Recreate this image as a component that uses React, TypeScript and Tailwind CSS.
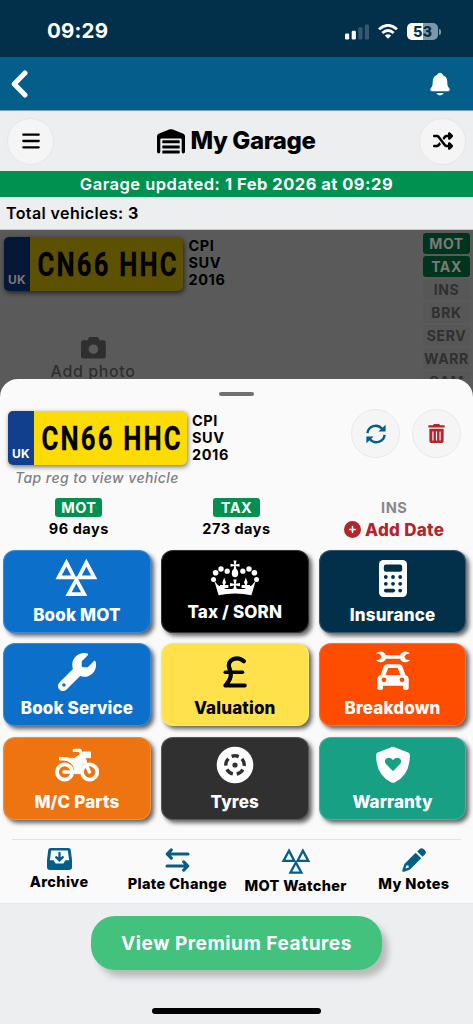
import React from 'react'
import type { ReactNode } from 'react'
import { FaCirclePlus, FaShuffle, FaTrashCan, FaWrench } from 'react-icons/fa6'
import { IoNotifications } from 'react-icons/io5'
import clsx from 'clsx'

const Triangles = ({ className, stroke }: { className: string; stroke: number }) => (
  <svg viewBox="0 0 42 36" className={className} fill="none" stroke="currentColor" strokeWidth={stroke}>
    <path d="M11.2 3.5 18.6 17.8H3.5Z" />
    <path d="M30.6 3.5 38.3 17.8H23.2Z" />
    <path d="M20.8 20.2 28.6 34.3H13.2Z" />
  </svg>
)

const GarageIcon = () => (
  <svg viewBox="0 0 28 25" className="h-[25px] w-7" fill="currentColor">
    <path d="M0 22.8V7.2Q0 5.4 1.6 4.7L12.8.3Q14 0 15.2.3L26.4 4.7Q28 5.4 28 7.2V22.8Q28 24.4 26.3 24.4 24.7 24.4 24.7 22.8V10.6Q24.7 9.4 23.5 9.4H4.5Q3.3 9.4 3.3 10.6V22.8Q3.3 24.4 1.7 24.4 0 24.4 0 22.8Z" />
    <rect x="5.3" y="11.3" width="17.4" height="3" rx=".6" />
    <rect x="5.3" y="16.4" width="17.4" height="3" rx=".6" />
    <rect x="5.3" y="21.4" width="17.4" height="3" rx=".6" />
  </svg>
)

const CameraIcon = () => (
  <svg viewBox="0 0 25 22" className="h-[22px] w-[25px]" fill="currentColor">
    <path
      fillRule="evenodd"
      d="M9 0H16Q17.2 0 17.6 1.2L18.3 3.2H22.3Q24.8 3.2 24.8 5.7V19Q24.8 21.5 22.3 21.5H2.5Q0 21.5 0 19V5.7Q0 3.2 2.5 3.2H6.7L7.4 1.2Q7.8 0 9 0ZM12.4 7.4A4.8 4.8 0 1 0 12.4 17 4.8 4.8 0 1 0 12.4 7.4Z"
    />
  </svg>
)

const RefreshIcon = () => (
  <svg viewBox="0 0 20 20" className="size-[20px]" fill="none" stroke="currentColor" strokeWidth="2.4">
    <path d="M1.4 9.2A8.3 8.3 0 0 1 16 4.8" />
    <path d="M18.6 10.8A8.3 8.3 0 0 1 4 15.2" />
    <path d="M19.6.8V7.6H12.4Z" fill="currentColor" stroke="none" />
    <path d="M.4 19.2V12.4H7.6Z" fill="currentColor" stroke="none" />
  </svg>
)

const cross = 'M-1.7-5.2H1.7L.8-.8 5-1.7V1.7L.8.8 1.7 5H-1.7L-.8.8-5 1.7V-1.7L-.8-.8Z'

const CrownIcon = () => (
  <svg viewBox="0 0 50 36" className="h-9 w-[50px]" fill="currentColor">
    <path d="M4.2 20.5 8.6 35.2Q25 31.8 41.4 35.2L45.8 20.5 42.6 24.6Q40 27.6 37.6 25.4 36.4 29.4 31 29 26 29 25 27.4 24 29 19 29 13.6 29.4 12.4 25.4 10 27.6 7.4 24.6Z" />
    <path d={cross} transform="translate(25 24.6)" />
    <path d={cross} transform="translate(25 5.3) scale(.9)" />
    <ellipse cx="25" cy="13.2" rx="3.2" ry="4.1" />
    <path d="M14.2 17.6 16 22.5 14.8 25H18.4V28H10V25H13.2L12.4 22.5Z" />
    <path d="M35.8 17.6 34 22.5 35.2 25H31.6V28H40V25H36.8L37.6 22.5Z" />
    <circle cx="3.5" cy="19.4" r="2.5" />
    <circle cx="5.6" cy="12.8" r="2.8" />
    <circle cx="11" cy="9" r="2.7" />
    <circle cx="17.2" cy="11.2" r="2.6" />
    <circle cx="32.8" cy="11.2" r="2.6" />
    <circle cx="39" cy="9" r="2.7" />
    <circle cx="44.4" cy="12.8" r="2.8" />
    <circle cx="46.5" cy="19.4" r="2.5" />
  </svg>
)

const CalculatorIcon = () => (
  <svg viewBox="0 0 28 37" className="h-[37px] w-7">
    <rect width="28" height="37" rx="4.5" fill="currentColor" />
    <g fill="#02304a">
      <rect x="4.8" y="4.5" width="18.4" height="7.3" rx="2.2" />
      <circle cx="6.8" cy="17" r="1.9" />
      <circle cx="14" cy="17" r="1.9" />
      <circle cx="21.2" cy="17" r="1.9" />
      <circle cx="6.8" cy="23.8" r="1.9" />
      <circle cx="14" cy="23.8" r="1.9" />
      <circle cx="21.2" cy="23.8" r="1.9" />
      <rect x="4.9" y="28.8" width="11.2" height="3.6" rx="1.8" />
      <circle cx="21.2" cy="30.6" r="1.9" />
    </g>
  </svg>
)

const PoundIcon = () => (
  <svg viewBox="0 0 24 32" className="h-8 w-6" fill="none" stroke="currentColor" strokeWidth="4.2" strokeLinecap="round" strokeLinejoin="round">
    <path d="M20.8 5.3C18.5 3 16.3 2.3 13.8 2.3 9 2.3 5.6 5.5 5.8 9.8 6 12 7.8 14 7.8 19 7.8 23.5 5 26 2.5 29.5H21.7" />
    <path d="M2.2 16.3H19.6" strokeWidth="3.4" />
  </svg>
)

const RepairIcon = () => (
  <svg viewBox="0 0 36 40" className="h-10 w-9" fill="currentColor">
    <path d="M1 2.3Q3.2.3 6 .4 9.5.8 11 4.2H25Q26.5.8 30 .4 32.8.3 35 2.3L31 3.2 29.3 5.8 31 8.4 35 9.3Q32.8 11.4 30 11.3 26.5 11 25 7.7H11Q9.5 11 6 11.3 3.2 11.4 1 9.3L5 8.4 6.7 5.8 5 3.2Z" />
    <path
      fillRule="evenodd"
      d="M12 13.2H24Q26.5 13.2 27.4 15.6L30.5 24.3Q33.7 25 33.7 28.5V37Q33.7 39 31.5 39H30Q28 39 28 37V34.8H8V37Q8 39 6 39H4.5Q2.3 39 2.3 37V28.5Q2.3 25 5.5 24.3L8.6 15.6Q9.5 13.2 12 13.2ZM13.3 17 10.5 24H25.5L22.7 17ZM9 26.4A2.4 2.4 0 1 0 9 31.2 2.4 2.4 0 1 0 9 26.4ZM27 26.4A2.4 2.4 0 1 0 27 31.2 2.4 2.4 0 1 0 27 26.4Z"
    />
  </svg>
)

const BikeIcon = () => (
  <svg viewBox="0 0 44 34" className="h-[34px] w-11" fill="none" stroke="currentColor" strokeWidth="3.8">
    <circle cx="9.6" cy="24" r="7.6" />
    <circle cx="34.6" cy="24" r="7.6" />
    <path d="M9 24H21" strokeWidth="3.4" strokeLinecap="round" />
    <path d="M19.2 2.4H25L34.4 24" strokeWidth="3.4" strokeLinecap="round" strokeLinejoin="round" />
    <path d="M4.5 9.4Q10 9 15 10.4 20 11.4 23 8L28.5 4H35.5V9.6H30.4L31.4 14.2Q27.4 15.4 26 19.5L25 25.6H20Q20.5 16 12 12.6 8 11.6 4.5 12Z" fill="currentColor" strokeWidth="1" strokeLinejoin="round" />
  </svg>
)

const TyreIcon = () => (
  <svg viewBox="0 0 38 38" className="size-[38px]" fill="none">
    <circle cx="19" cy="19" r="18.3" fill="currentColor" />
    <circle cx="19" cy="19" r="9.2" stroke="#303030" strokeWidth="3.4" strokeDasharray="7.6 3.96" strokeDashoffset="3.8" transform="rotate(-90 19 19)" />
    <circle cx="19" cy="19" r="2.6" fill="#303030" />
  </svg>
)

const ShieldIcon = () => (
  <svg viewBox="0 0 36 38" className="h-[38px] w-9" fill="currentColor">
    <path
      fillRule="evenodd"
      d="M16.4 1.2Q18 .4 19.6 1.2L33.2 6.4Q35 7.2 34.9 9.2 34.8 29.5 19.6 36.4 18 37.2 16.4 36.4 1.2 29.5 1.1 9.2 1 7.2 2.8 6.4ZM18 25.2 25 18Q27.3 15 25 12.7 21.5 10.2 18 14 14.5 10.2 11 12.7 8.7 15 11 18Z"
    />
  </svg>
)

const ArchiveIcon = () => (
  <svg viewBox="0 0 25 22" className="h-[22px] w-[25px]">
    <path d="M3.4 0H21.6Q23.4 0 23.7 1.8L25 12V19Q25 22 22 22H3Q0 22 0 19V12L1.3 1.8Q1.6 0 3.4 0Z" fill="#055e8a" />
    <path d="M4.2 2.6H20.8L22.2 12.3H18.4L16.4 15.4H8.6L6.6 12.3H2.8Z" fill="#fafafa" />
    <path d="M12.5 5V12M9.2 9.2 12.5 12.4 15.8 9.2" stroke="#055e8a" strokeWidth="2.3" fill="none" strokeLinecap="round" />
  </svg>
)

const SwapIcon = () => (
  <svg viewBox="0 0 25 24" className="h-6 w-[25px]" fill="none" stroke="currentColor" strokeWidth="3.1" strokeLinecap="round" strokeLinejoin="round">
    <path d="M23 6H2.2M6.3 1.8 2.2 6 6.3 10.2" />
    <path d="M2 18H22.8M18.7 13.8 22.8 18 18.7 22.2" />
  </svg>
)

const PencilIcon = () => (
  <svg viewBox="0 0 24 24" className="size-6" fill="currentColor">
    <path d="M17.4 1.2Q19.6-.9 22 1.4L22.7 2.1Q25 4.4 22.8 6.6L20.6 8.7 15.2 3.4Z" />
    <path fillRule="evenodd" d="M13.7 4.8 19.2 10.3 8 21.4 2.2 23.7Q0 24.4.4 22L2.4 16ZM4.6 17.2 3.4 20.6 6.8 19.4 6.5 17.6Z" />
  </svg>
)

const StatusBar = () => (
  <div className="flex h-[57px] items-center justify-between bg-[#02304a] pt-[6px] pr-[32px] pl-[47px] text-white">
    <span className="text-[20.5px] font-bold tracking-[0.2px]">09:29</span>
    <div className="flex items-center">
      <svg viewBox="0 0 25 16" className="mr-2 h-4 w-[25px]" fill="currentColor">
        <rect x="0" y="9.5" width="4.2" height="6" rx="1.2" />
        <rect x="6.7" y="6.7" width="4.2" height="8.8" rx="1.2" />
        <rect x="13.3" y="3.3" width="4.2" height="12.2" rx="1.2" opacity=".2" />
        <rect x="19.8" y="0.5" width="4.2" height="15" rx="1.2" opacity=".2" />
      </svg>
      <svg viewBox="0 0 20 15" className="mr-[9px] h-[15px] w-5" fill="none" stroke="currentColor" strokeWidth="2.8">
        <path d="M1 5.3Q10-2.6 19 5.3" />
        <path d="M4.3 9Q10 4 15.7 9" />
        <path d="M10 14.7 6.8 11.5Q10 8.8 13.2 11.5Z" fill="currentColor" stroke="none" />
      </svg>
      <div className="flex h-[17px] w-[31px] items-center justify-center rounded-[5px] bg-linear-to-r from-white from-53% to-[#7f97a4] to-53% text-[14.5px] font-extrabold">
        <span className="text-[#02304a]">53</span>
      </div>
      <span className="ml-px h-[6px] w-[2px] rounded-r-full bg-[#7f97a4]" />
    </div>
  </div>
)

const Plate = ({ dim }: { dim?: boolean }) => (
  <div
    className={clsx(
      'flex h-[53.5px] w-[178.5px] shrink-0 overflow-hidden rounded-[5px]',
      dim ? 'bg-[#5c5003] shadow-[1px_2px_5px_#222]' : 'bg-[#fddc06] shadow-[1px_2px_5px_#777]',
    )}
  >
    <div
      className={clsx(
        'flex w-[26px] items-end justify-center pb-[4px] text-[12px] leading-[14px] font-bold tracking-[0.3px]',
        dim ? 'bg-[#051838] text-[#777]' : 'bg-[#123f8d] text-white',
      )}
    >
      UK
    </div>
    <svg viewBox="0 0 152 53" className="h-[53px] w-[152px] font-['Roboto'] text-[32.5px] font-bold" fill="#000" stroke="#000" strokeWidth=".3">
      <text transform="translate(7.5 38.6) scale(0.79 1)" textLength="176" lengthAdjust="spacing">
        CN66 HHC
      </text>
    </svg>
  </div>
)

const Model = () => (
  <div className="text-[14.5px] leading-[17px] font-bold tracking-[0.6px] text-black">
    <p>CPI</p>
    <p>SUV</p>
    <p>2016</p>
  </div>
)

const statuses = ['INS', 'BRK', 'SERV', 'WARR', 'CAM']

const VehicleList = () => (
  <div className="flex h-[150px] justify-between overflow-hidden bg-[#5a5a5a] pt-[3px] pr-[3px] pl-1">
    <div>
      <div className="flex gap-[6px] pt-[4px]">
        <Plate dim />
        <Model />
      </div>
      <div className="flex w-[178px] flex-col items-center gap-[2px] pt-[46px] text-[#2e2e2e]">
        <CameraIcon />
        <p className="text-[16px] leading-[20px] font-medium tracking-[0.6px]">Add photo</p>
      </div>
    </div>
    <div className="flex w-[47px] flex-col gap-[2px] text-center text-[14px] leading-[21px] font-bold tracking-[0.6px] text-[#303030]">
      <p className="rounded-[3px] bg-[#00351d] text-[#7a7a7a]">MOT</p>
      <p className="rounded-[3px] bg-[#00351d] text-[#7a7a7a]">TAX</p>
      {statuses.map((status) => (
        <p key={status} className="rounded-[3px] bg-[#575757]">
          {status}
        </p>
      ))}
    </div>
  </div>
)

const Tile = ({ label, className, children }: { label: string; className: string; children: ReactNode }) => (
  <button
    className={clsx(
      'flex h-[83px] flex-col items-center rounded-[12px] shadow-[3px_3px_4px_#666] outline outline-white/20 -outline-offset-1',
      className,
    )}
  >
    {children}
    <span className="mt-auto text-[17px] leading-[20px] font-extrabold tracking-[0.15px]">{label}</span>
  </button>
)

const App = () => {
  return (
    <main className="flex h-[1024px] w-[473px] flex-col overflow-hidden bg-[#edeef0] font-['Inter',sans-serif] text-black">
      <StatusBar />
      <header className="flex h-[54px] items-center justify-between border-b border-[#7ca2b8] bg-[#055e8a] pr-[20px] pl-[11px] text-white">
        <svg viewBox="0 0 17 28" className="h-7 w-[17px]" fill="none" stroke="currentColor" strokeWidth="5" strokeLinecap="round" strokeLinejoin="round">
          <path d="M14 3 3.2 14 14 25" />
        </svg>
        <IoNotifications className="size-[26px]" />
      </header>
      <div className="flex h-[60px] items-center justify-between px-[7px]">
        <button className="flex size-[47px] items-center justify-center rounded-full border border-[#e7e7e9] bg-[#f5f5f5]">
          <svg viewBox="0 0 18 16" className="h-4 w-[18px]" fill="none" stroke="#000" strokeWidth="2.3" strokeLinecap="round">
            <path d="M1.3 1.7H16.7M1.3 8H16.7M1.3 14.3H16.7" />
          </svg>
        </button>
        <h1 className="flex items-center gap-[5px] text-[24px] font-extrabold tracking-[-0.4px]">
          <GarageIcon />
          My Garage
        </h1>
        <button className="flex size-[47px] items-center justify-center rounded-full border border-[#e7e7e9] bg-[#f5f5f5]">
          <FaShuffle className="size-[20px]" />
        </button>
      </div>
      <p className="h-[26px] bg-[#009150] text-center text-[16.5px] leading-[26px] font-semibold tracking-[0.49px] text-white">
        Garage updated: <b className="font-bold">1 Feb 2026 at 09:29</b>
      </p>
      <p className="h-[33px] border-b border-[#c5c6c8] pl-[6px] text-[16px] leading-[32px] font-semibold tracking-[0.4px]">
        Total vehicles: <b className="font-bold">3</b>
      </p>
      <VehicleList />
      <div className="-mt-[1px] bg-[#5a5a5a]">
        <section className="h-[525px] rounded-t-[18px] border-b border-[#e8e8e8] bg-[#fafafa] pt-[13px]">
          <div className="mx-auto h-[4px] w-[35px] rounded-full bg-[#707070]" />
          <div className="flex items-start pt-[15px] pr-[12px] pl-[8px]">
            <Plate />
            <div className="-mt-[1.5px] ml-[5.5px] flex-1 pt-[2px]">
              <Model />
            </div>
            <div className="-mt-[2px] flex gap-[12px]">
              <button className="flex size-[49px] items-center justify-center rounded-full border border-[#e9e9e9] bg-[#f5f5f5] text-[#055e8a]">
                <RefreshIcon />
              </button>
              <button className="flex size-[49px] items-center justify-center rounded-full border border-[#e9e9e9] bg-[#f5f5f5] text-[#b2262d]">
                <FaTrashCan className="size-[19px]" />
              </button>
            </div>
          </div>
          <p className="pt-[3px] pl-[15px] text-[14px] leading-[20px] font-medium tracking-[0.42px] text-[#808080] italic">
            Tap reg to view vehicle
          </p>
          <div className="grid h-[62px] grid-cols-3 pt-[10px] text-center text-[14.5px] font-bold tracking-[0.5px]">
            <div className="flex flex-col items-center">
              <p className="w-[47px] rounded-[3px] bg-[#009150] leading-[19px] text-white">MOT</p>
              <p className="leading-[24px]">96 days</p>
            </div>
            <div className="flex flex-col items-center">
              <p className="w-[47px] rounded-[3px] bg-[#009150] leading-[19px] text-white">TAX</p>
              <p className="leading-[24px]">273 days</p>
            </div>
            <div className="flex flex-col items-center">
              <p className="leading-[19px] text-[#888]">INS</p>
              <p className="flex items-center gap-[4px] text-[17px] leading-[26px] font-extrabold tracking-[0.3px] text-[#b2262d]">
                <FaCirclePlus className="size-[17px]" />
                Add Date
              </p>
            </div>
          </div>
          <div className="grid grid-cols-3 gap-x-[10px] gap-y-[10.5px] pr-[6.5px] pl-[3px]">
            <Tile label="Book MOT" className="bg-[#0c6fca] pt-[9px] pb-[8px] text-white">
              <Triangles className="h-[37px] w-[43px]" stroke={3.6} />
            </Tile>
            <Tile label="Tax / SORN" className="bg-black pt-[10px] pb-[11px] text-white">
              <CrownIcon />
            </Tile>
            <Tile label="Insurance" className="bg-[#02304a] pt-[10px] pb-[8px] text-white">
              <CalculatorIcon />
            </Tile>
            <Tile label="Book Service" className="bg-[#0c6fca] pt-[10px] pb-[8px] text-white">
              <FaWrench className="size-[38px]" />
            </Tile>
            <Tile label="Valuation" className="bg-[#ffe24b] pt-[13px] pb-[8px] text-black">
              <PoundIcon />
            </Tile>
            <Tile label="Breakdown" className="bg-[#ff4d00] pt-[8px] pb-[8px] text-white">
              <RepairIcon />
            </Tile>
            <Tile label="M/C Parts" className="bg-[#ee7411] pt-[11px] pb-[8px] text-white">
              <BikeIcon />
            </Tile>
            <Tile label="Tyres" className="bg-[#303030] pt-[9px] pb-[8px] text-white">
              <TyreIcon />
            </Tile>
            <Tile label="Warranty" className="bg-[#18a085] pt-[9px] pb-[8px] text-white">
              <ShieldIcon />
            </Tile>
          </div>
          <div className="mx-[12px] mt-[19px] border-t border-[#e2e2e2]" />
          <nav className="grid grid-cols-4 pt-[8px] text-center text-[14.5px] leading-[18px] font-extrabold tracking-[0.35px] whitespace-nowrap text-[#055e8a]">
            <div className="flex flex-col items-center gap-[3px]">
              <ArchiveIcon />
              <span className="text-black">Archive</span>
            </div>
            <div className="flex flex-col items-center gap-[3px]">
              <SwapIcon />
              <span className="text-black">Plate Change</span>
            </div>
            <div className="flex flex-col items-center gap-[3px]">
              <Triangles className="h-[26px] w-[30px]" stroke={3.2} />
              <span className="text-black">MOT Watcher</span>
            </div>
            <div className="flex flex-col items-center gap-[3px]">
              <PencilIcon />
              <span className="text-black">My Notes</span>
            </div>
          </nav>
        </section>
      </div>
      <button className="mx-auto mt-[12px] h-[54px] w-[291px] rounded-[24px] bg-[#43c27e] pt-[2px] text-[19px] font-bold tracking-[0.55px] text-white shadow-[6px_7px_6px_#bbb]">
        View Premium Features
      </button>
      <div className="mx-auto mt-auto mb-[10px] h-[6px] w-[169px] rounded-full bg-black" />
    </main>
  )
}

export default App
